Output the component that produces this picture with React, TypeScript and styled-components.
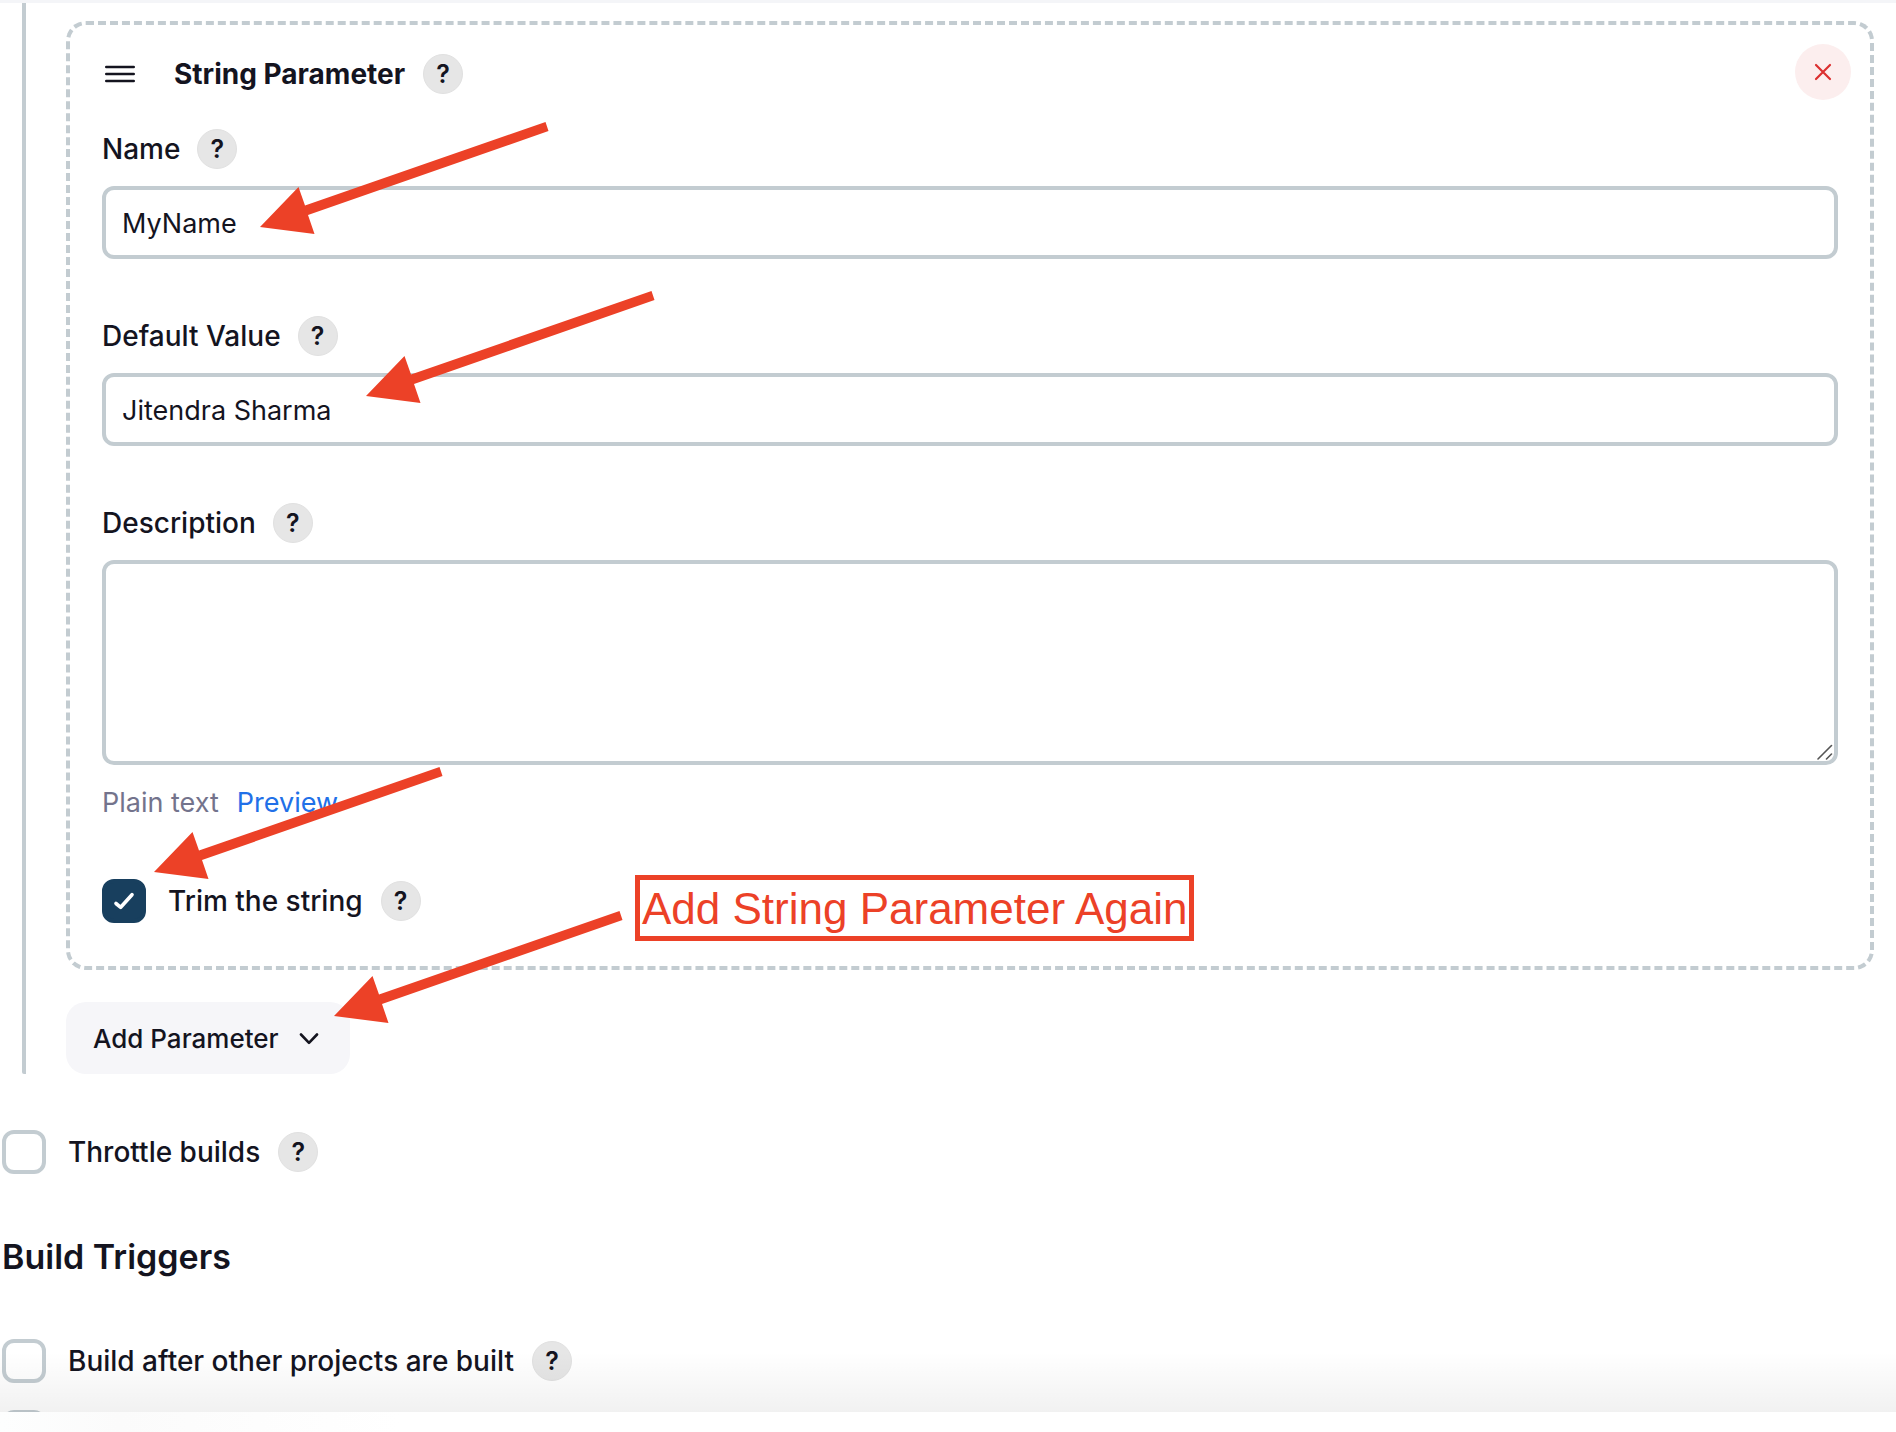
import React, { useState } from "react";
import styled, { createGlobalStyle, css } from "styled-components";

const color = {
  text: "#14141f",
  secondary: "#73738c",
  border: "#c3ccd1",
  link: "#2170e8",
  checked: "#183f5e",
  mark: "#ec4127",
};

const GlobalStyle = createGlobalStyle`
  *, *::before, *::after { box-sizing: border-box; }
  body {
    margin: 0;
    background: #fff;
    color: ${color.text};
    font-family: Inter, "Liberation Sans", sans-serif;
    font-size: 27px;
    line-height: 40px;
  }
  button, input, textarea { font: inherit; color: inherit; }
`;

const Page = styled.div`
  display: flex;
  flex-direction: column;
  height: 100vh;
  border-top: 3px solid #f4f5f8;
`;

const Viewport = styled.main`
  position: relative;
  flex: 1;
  min-height: 0;
  overflow: hidden;
`;

const BottomShade = styled.div`
  position: absolute;
  inset: auto 0 0 0;
  height: 60px;
  background: linear-gradient(to bottom, rgba(0, 0, 0, 0), rgba(0, 0, 0, 0.055));
  pointer-events: none;
`;

const BottomBar = styled.footer`
  height: 20px;
  background: linear-gradient(to right, #fdfefe, #fbfbfb 120px, #fff 400px);
`;

const Nested = styled.section`
  margin-left: 22px;
  padding: 18px 22px 0 40px;
  border-left: 4px solid ${color.border};
  border-bottom-left-radius: 2px;
`;

const ParameterCard = styled.div`
  padding: 19px 19px 43px 20px;
  border: 4px dashed ${color.border};
  border-radius: 20px;
`;

const CardHeader = styled.header`
  display: flex;
  justify-content: space-between;
  align-items: center;
  padding-left: 12px;
`;

const CardTitle = styled.div`
  display: flex;
  align-items: center;
  gap: 18px;
  padding-top: 4px;
`;

const DragHandle = styled.button`
  display: flex;
  width: 54px;
  padding: 0 0 0 3px;
  border: 0;
  background: none;
`;

const Title = styled.h3`
  margin: 0;
  font-size: 28px;
  font-weight: 700;
`;

const DeleteButton = styled.button`
  display: grid;
  place-items: center;
  width: 56px;
  height: 56px;
  padding: 0;
  border: 0;
  border-radius: 50%;
  background: #fceeee;
`;

const HelpButton = styled.button`
  flex: none;
  width: 40px;
  height: 40px;
  padding: 0;
  border: 1px solid #e1e1e1;
  border-radius: 50%;
  background: #e6e6e6;
  font-size: 25px;
  font-weight: 600;
  line-height: 38px;
  text-align: center;
`;

const Fields = styled.div`
  display: flex;
  flex-direction: column;
  gap: 57px;
  padding: 29px 13px 0 12px;
`;

const Field = styled.div`
  display: flex;
  flex-direction: column;
  gap: 17px;
`;

const LabelRow = styled.div`
  display: flex;
  align-items: center;
  gap: 17px;
`;

const Label = styled.label`
  font-size: 28px;
  font-weight: 500;
`;

const box = css`
  display: block;
  width: 100%;
  border: 4px solid ${color.border};
  border-radius: 12px;
  background: #fff;
  outline: none;
`;

const TextInput = styled.input`
  ${box}
  height: 73px;
  padding: 2px 16px 0;
`;

const AreaWrap = styled.div`
  position: relative;
`;

const TextArea = styled.textarea`
  ${box}
  height: 205px;
  padding: 12px 16px;
  resize: none;
`;

const Grip = styled.svg`
  position: absolute;
  right: 5px;
  bottom: 5px;
`;

const FormatRow = styled.div`
  display: flex;
  gap: 18px;
  padding: 18px 12px 56px;
  color: ${color.secondary};
`;

const PreviewLink = styled.a`
  color: ${color.link};
  text-decoration: none;
`;

const CheckRow = styled.div<{ $inset?: boolean }>`
  display: flex;
  align-items: center;
  gap: 18px;
  padding-left: ${(p) => (p.$inset ? 12 : 0)}px;
`;

const CheckLabel = styled.label`
  display: flex;
  align-items: center;
  gap: 22px;
  font-size: 28px;
  font-weight: 500;
`;

const Checkbox = styled.input.attrs({ type: "checkbox" })`
  display: grid;
  place-items: center;
  flex: none;
  appearance: none;
  width: 44px;
  height: 44px;
  margin: 0;
  border: 4px solid ${color.border};
  border-radius: 12px;
  background: #fff;

  &:checked {
    border-color: ${color.checked};
    background: ${color.checked};
  }
`;

const CheckMark = styled.svg`
  position: absolute;
  inset: 0;
  pointer-events: none;
`;

const CheckWrap = styled.span`
  position: relative;
  display: flex;
`;

const AddButton = styled.button`
  display: flex;
  align-items: center;
  gap: 20px;
  height: 72px;
  margin-top: 32px;
  padding: 2px 31px 0 27px;
  border: 0;
  border-radius: 20px;
  background: #f6f6f9;
  font-size: 26px;
  font-weight: 500;
`;

const Options = styled.section`
  display: flex;
  flex-direction: column;
  gap: 27px;
  padding: 56px 2px 0;
`;

const SectionTitle = styled.h2`
  margin: 36px 0 35px;
  font-size: 34px;
  font-weight: 600;
`;

const Arrow = styled.svg<{ $x: number; $y: number }>`
  position: absolute;
  left: ${(p) => p.$x}px;
  top: ${(p) => p.$y}px;
  width: 290px;
  height: 114px;
  fill: ${color.mark};
  pointer-events: none;
`;

const Callout = styled.div`
  position: absolute;
  left: 635px;
  top: 872px;
  padding: 4px 2px 2px;
  border: 5px solid ${color.mark};
  color: ${color.mark};
  font-family: "Liberation Sans", Arial, sans-serif;
  font-size: 44px;
  line-height: 50px;
  white-space: nowrap;
`;

const Help = () => <HelpButton type="button">?</HelpButton>;

function CheckOption({ id, text, checked = false, inset }: { id: string; text: string; checked?: boolean; inset?: boolean }) {
  const [on, setOn] = useState(checked);
  return (
    <CheckRow $inset={inset}>
      <CheckLabel htmlFor={id}>
        <CheckWrap>
          <Checkbox id={id} checked={on} onChange={() => setOn(!on)} />
          {on && (
            <CheckMark width="44" height="44" viewBox="0 0 44 44" fill="none" stroke="#fff" strokeWidth="3.6" strokeLinecap="round" strokeLinejoin="round">
              <path d="M14 24.5 L18.7 28.3 L30 15.7" />
            </CheckMark>
          )}
        </CheckWrap>
        {text}
      </CheckLabel>
      <Help />
    </CheckRow>
  );
}

function TextField({ id, label, value }: { id: string; label: string; value: string }) {
  return (
    <Field>
      <LabelRow>
        <Label htmlFor={id}>{label}</Label>
        <Help />
      </LabelRow>
      <TextInput id={id} type="text" defaultValue={value} />
    </Field>
  );
}

const PointerArrow = ({ x, y }: { x: number; y: number }) => (
  <Arrow $x={x} $y={y - 105} viewBox="0 -105 290 114" aria-hidden="true">
    <polygon points="0,0 38.5,-40 45,-21.5 285.5,-105 288.5,-96 48,-12 54.5,7" />
  </Arrow>
);

export default function App() {
  return (
    <Page>
      <GlobalStyle />
      <Viewport>
        <Nested>
          <ParameterCard>
            <CardHeader>
              <CardTitle>
                <DragHandle type="button" aria-label="Reorder">
                  <svg width="30" height="18" viewBox="0 0 30 18" stroke={color.text} strokeWidth="2.6" strokeLinecap="round">
                    <path d="M1.3 2H28.7M1.3 9H28.7M1.3 16H28.7" />
                  </svg>
                </DragHandle>
                <Title>String Parameter</Title>
                <Help />
              </CardTitle>
              <DeleteButton type="button" aria-label="Delete">
                <svg width="18" height="18" viewBox="0 0 18 18" stroke="#dc3030" strokeWidth="2.2" strokeLinecap="round">
                  <path d="M2 2L16 16M16 2L2 16" />
                </svg>
              </DeleteButton>
            </CardHeader>
            <Fields>
              <TextField id="name" label="Name" value="MyName" />
              <TextField id="default" label="Default Value" value="Jitendra Sharma" />
              <Field>
                <LabelRow>
                  <Label htmlFor="description">Description</Label>
                  <Help />
                </LabelRow>
                <AreaWrap>
                  <TextArea id="description" />
                  <Grip width="16" height="16" viewBox="0 0 16 16" stroke="#555" strokeWidth="1.6" strokeLinecap="round" aria-hidden="true">
                    <path d="M1 15L14.5 1.5M9.5 15L14.5 10" />
                  </Grip>
                </AreaWrap>
              </Field>
            </Fields>
            <FormatRow>
              <span>Plain text</span>
              <PreviewLink href="#preview">Preview</PreviewLink>
            </FormatRow>
            <CheckOption id="trim" text="Trim the string" checked inset />
          </ParameterCard>
          <AddButton type="button">
            Add Parameter
            <svg width="20" height="12" viewBox="0 0 20 12" fill="none" stroke={color.text} strokeWidth="2.6" strokeLinecap="round" strokeLinejoin="round">
              <path d="M2 1.5L10 9.8L18 1.5" />
            </svg>
          </AddButton>
        </Nested>
        <Options>
          <CheckOption id="throttle" text="Throttle builds" />
          <SectionTitle>Build Triggers</SectionTitle>
          <CheckOption id="after" text="Build after other projects are built" />
          <Checkbox aria-label="Build periodically" />
        </Options>
        <PointerArrow x={260} y={224} />
        <PointerArrow x={366} y={393} />
        <PointerArrow x={154} y={869} />
        <PointerArrow x={334} y={1013} />
        <Callout>Add String Parameter Again</Callout>
        <BottomShade />
      </Viewport>
      <BottomBar />
    </Page>
  );
}
